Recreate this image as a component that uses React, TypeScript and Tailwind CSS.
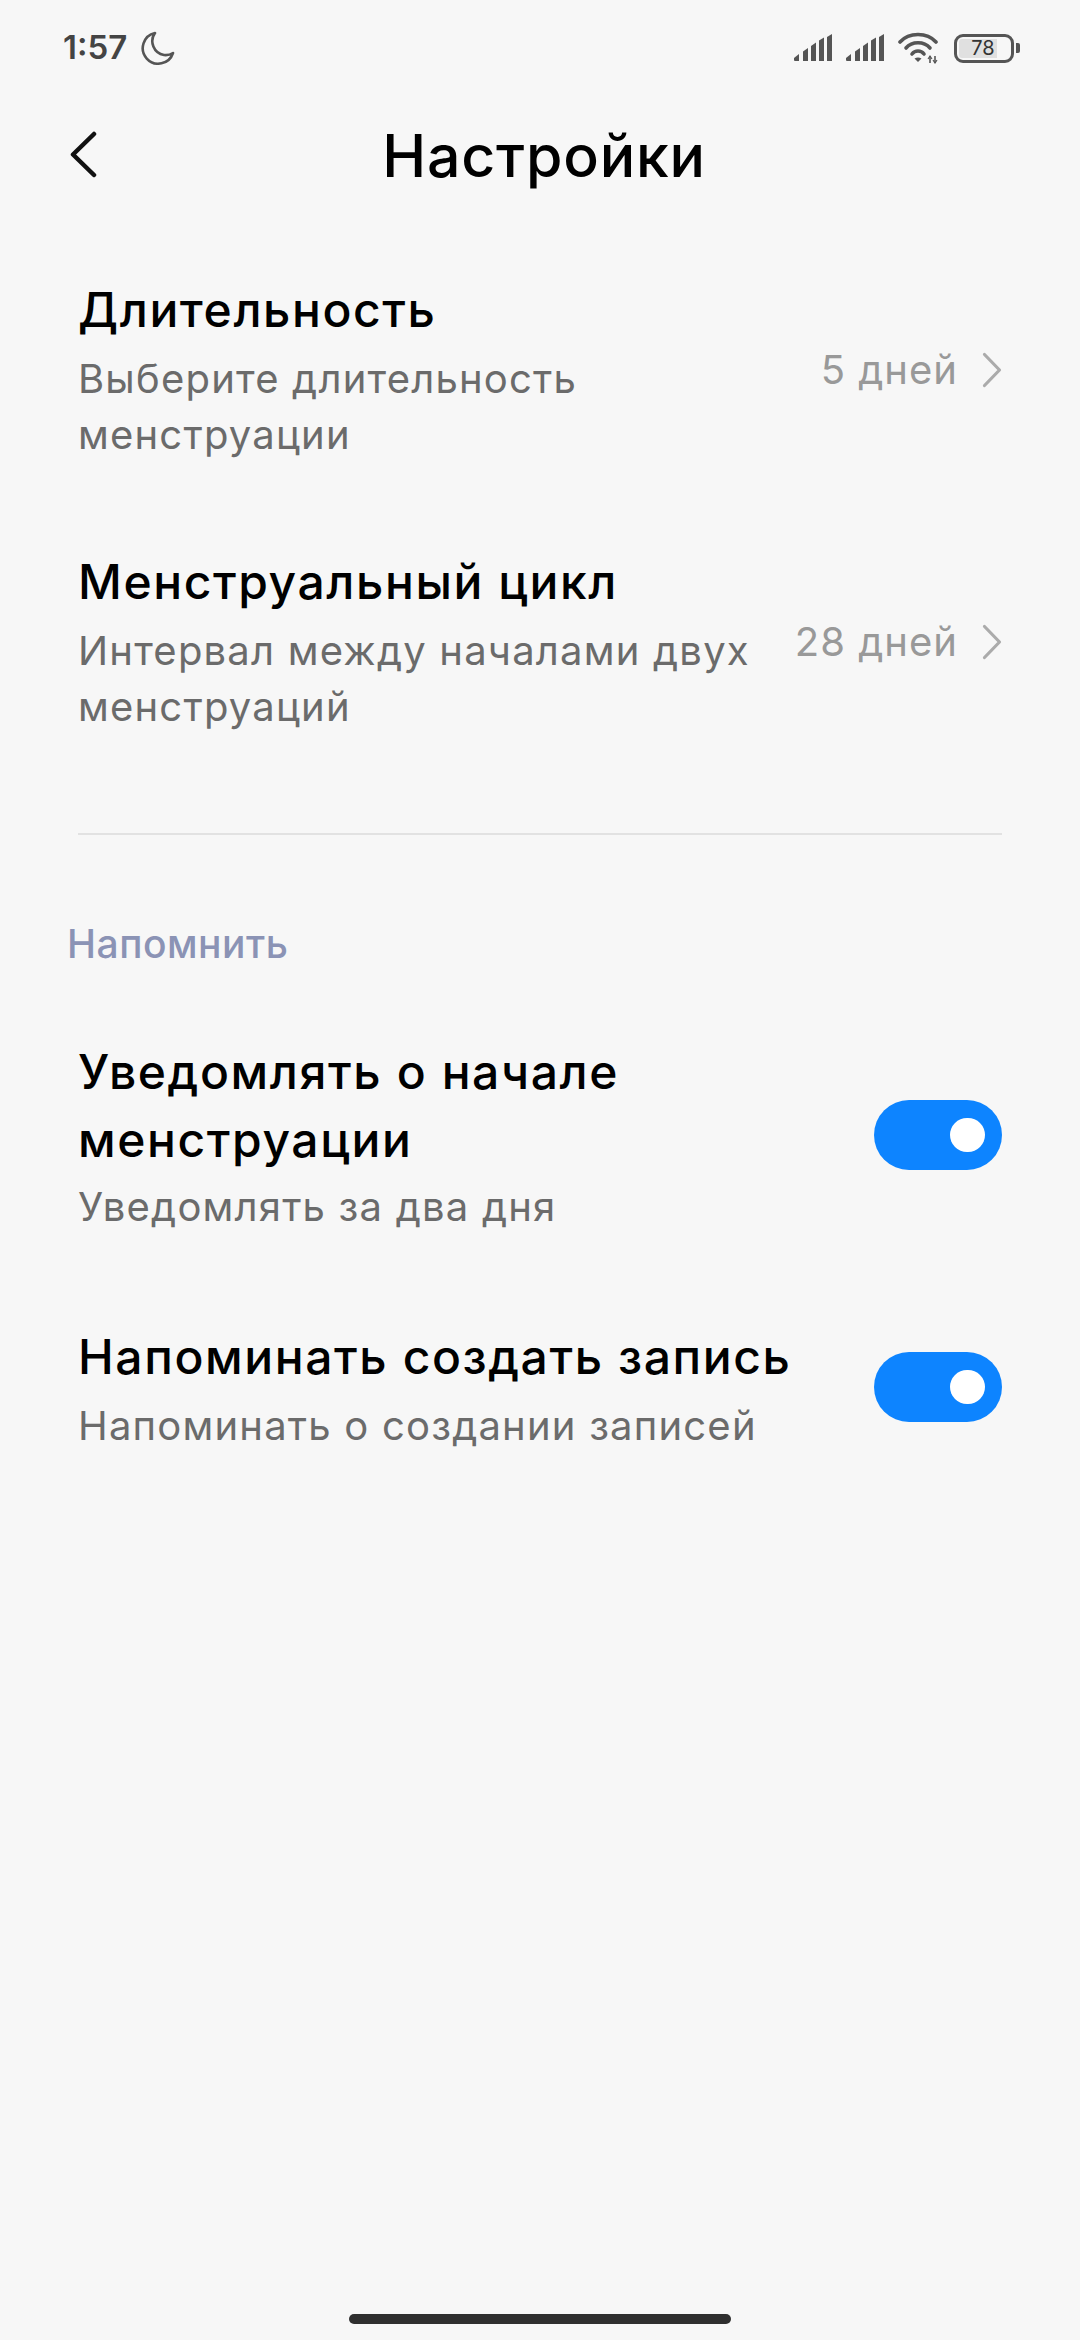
const font = { fontFamily: 'Inter, "Noto Sans", sans-serif' };

function Signal() {
  return (
    <svg width="38" height="28" viewBox="0 0 38 28" fill="#555">
      <path d="M0 24 L5 20 V27 H1 Q0 27 0 26 Z" />
      <path d="M9 17.5 L14 14 V27 H9 Z" />
      <path d="M17 12 L22 8.5 V27 H17 Z" />
      <path d="M25 6.5 L30 3.5 V27 H25 Z" />
      <path d="M33 3 L38 0 V27 H33 Z" />
    </svg>
  );
}

function Chevron() {
  return (
    <svg width="20" height="36" viewBox="0 0 20 36" fill="none" stroke="#ababab" strokeWidth="3.2" strokeLinecap="round" strokeLinejoin="round">
      <path d="M2.5 2.5 L17.5 18 L2.5 33.5" />
    </svg>
  );
}

function Toggle() {
  return (
    <div className="mb-[4px] flex h-[70px] w-[128px] shrink-0 items-center justify-end rounded-[35px] bg-[#0d84ff] pr-[17px]">
      <div className="h-[34px] w-[35px] rounded-full bg-white" />
    </div>
  );
}

function ValueRow({ title, sub, value, className }: { title: string; sub: string; value: string; className: string }) {
  return (
    <div className={`flex items-center justify-between px-[78px] ${className}`}>
      <div className="w-[690px]">
        <div className="text-[48px] font-medium leading-[68px] tracking-[1.6px] text-black">{title}</div>
        <div className="mt-[7px] text-[40px] leading-[56px] tracking-[1.2px] text-[#6b6b6b]">{sub}</div>
      </div>
      <div className="flex items-center gap-[24px]">
        <span className="whitespace-nowrap text-[40px] tracking-[1px] text-[#999999]">{value}</span>
        <Chevron />
      </div>
    </div>
  );
}

function ToggleRow({ title, sub, className, subGap }: { title: string; sub: string; className: string; subGap: string }) {
  return (
    <div className={`flex items-center justify-between px-[78px] ${className}`}>
      <div className="w-[740px]">
        <div className="text-[48px] font-medium leading-[68px] tracking-[1.6px] text-black">{title}</div>
        <div className={`text-[40px] leading-[56px] tracking-[1.2px] text-[#6b6b6b] ${subGap}`}>{sub}</div>
      </div>
      <Toggle />
    </div>
  );
}

export default function App() {
  return (
    <div className="relative h-[2340px] w-[1080px] overflow-hidden bg-[#f7f7f7]" style={font}>
      <div className="flex h-[96px] items-center justify-between pl-[63px] pr-[60px]">
        <div className="flex items-center gap-[14px]">
          <span className="text-[33px] font-semibold text-[#444444]">1:57</span>
          <svg width="34" height="34" viewBox="0 0 34 34" fill="none" stroke="#555" strokeWidth="2.6">
            <path d="M14 2 A15.5 15.5 0 1 0 32 22 A14 14 0 0 1 23 24 A14 14 0 0 1 14 2 Z" strokeLinejoin="round" />
          </svg>
        </div>
        <div className="flex items-center gap-[14px]">
          <Signal />
          <Signal />
          <svg width="42" height="32" viewBox="0 0 42 32" fill="none" stroke="#555" strokeWidth="3.6" strokeLinecap="round">
            <path d="M2 10 C11 0 29 0 38 10" />
            <path d="M8 16 C14 9 26 9 32 16" />
            <path d="M14 22 C17 18 23 18 26 22" />
            <path d="M20 30 L16.5 26.5 Q20 24.5 23.5 26.5 Z" fill="#555" stroke="none" />
            <path d="M32 24 V31 M37 24 V31" strokeWidth="1.6" strokeLinecap="butt" />
            <path d="M30 27 L32 24 L34 27 M35 28 L37 31 L39 28" strokeWidth="1.2" strokeLinecap="butt" />
          </svg>
          <div className="flex items-center">
            <div className="relative h-[29px] w-[60px] rounded-[9px] border-[3px] border-[#555555] p-[2px]">
              <div className="h-full w-[38px] rounded-l-[3px] bg-[#e0e0e0]" />
              <span className="absolute inset-0 flex items-center justify-center pr-[2px] text-[20px] leading-none text-[#333333]">78</span>
            </div>
            <div className="ml-[2px] h-[10px] w-[4px] rounded-r-[2px] bg-[#555555]" />
          </div>
        </div>
      </div>
      <div className="relative flex h-[120px] items-center justify-center pl-[8px]">
        <svg className="absolute left-[69px] top-[35px]" width="28" height="48" viewBox="0 0 28 48" fill="none" stroke="#111" strokeWidth="4.5" strokeLinecap="round" strokeLinejoin="round">
          <path d="M25 3 L4 23.5 L25 44" />
        </svg>
        <h1 className="text-[59px] font-medium tracking-[0.8px] text-black">Настройки</h1>
      </div>
      <ValueRow className="mt-[60px]" title="Длительность" sub="Выберите длительность менструации" value="5 дней" />
      <ValueRow className="mt-[85px]" title="Менструальный цикл" sub="Интервал между началами двух менструаций" value="28 дней" />
      <div className="mx-[78px] mt-[98px] h-[2px] bg-[#e2e2e2]" />
      <div className="mt-[87px] pl-[67px] text-[39px] font-medium leading-[44px] tracking-[0.5px] text-[#8b93b5]">Напомнить</div>
      <ToggleRow className="mt-[72px]" subGap="mt-[5px]" title="Уведомлять о начале менструации" sub="Уведомлять за два дня" />
      <ToggleRow className="mt-[88px]" subGap="mt-[7px]" title="Напоминать создать запись" sub="Напоминать о создании записей" />
      <div className="absolute left-[349px] top-[2314px] h-[10px] w-[382px] rounded-full bg-[#2f2f2f]" />
    </div>
  );
}
